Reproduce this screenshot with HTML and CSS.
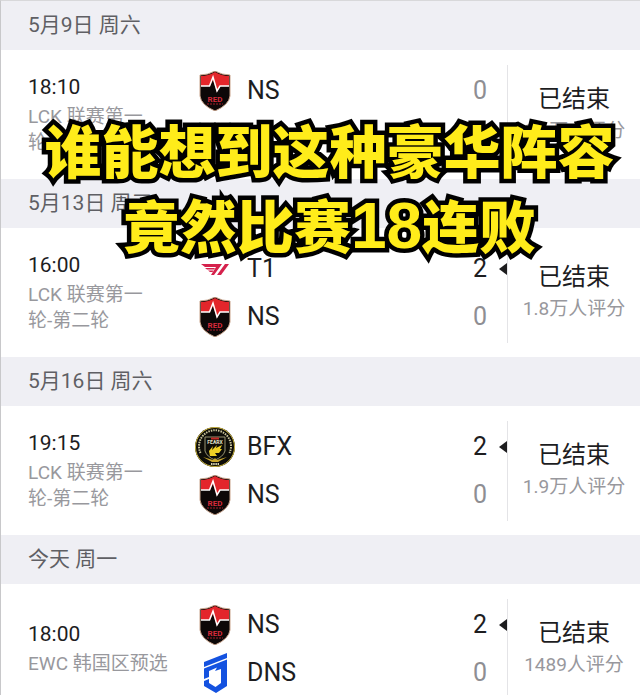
FILE: index.html
```html
<!DOCTYPE html>
<html lang="zh-CN">
<head>
    <meta charset="UTF-8">
    <meta name="viewport" content="width=device-width, initial-scale=1.0">
    <title>NS 赛程</title>
    <link rel="stylesheet" href="styles.css">
</head>
<body>
    <!-- Shared team logo -->
    <svg class="sprite" aria-hidden="true">
        <symbol id="logo-ns" viewBox="0 0 40 40">
            <path d="M20 0 Q27 4 35 4 V25 Q34 34 20 40 Q6 34 5 25 V4 Q13 4 20 0Z" fill="#0d0808" stroke="#c9a48c" stroke-width="1"/>
            <path d="M20 1 Q27 5 34 5 V15 H25 L22 21 L18 9 L15 15 H6 V5 Q13 5 20 1Z" fill="#e3262b"/>
            <path d="M6 15 H14.500 L18 6 L22 20 L25 15 H34" fill="none" stroke="#fff" stroke-width="1.500"/>
            <text x="20" y="31" class="logo-red">RED</text>
            <path d="M12 33 H28" stroke="#a81e2b" stroke-width="1" stroke-dasharray="2 1"/>
        </symbol>
    </svg>

    <main class="schedule">
        <section>
            <h2 class="date">5月9日 周六</h2>
            <div class="match">
                <div class="info">
                    <div class="time">18:10</div>
                    <div class="stage">LCK 联赛第一<br>轮-第二轮</div>
                </div>
                <div class="teams">
                    <div class="team">
                        <svg class="logo"><use href="#logo-ns"/></svg>
                        <span class="name">NS</span>
                        <span class="score">0</span>
                    </div>
                    <div class="team">
                        <svg class="logo" viewBox="0 0 40 40">
                            <path d="M4 3 L15 8 L11 11Z M36 3 L25 8 L29 11Z" fill="#12604c"/>
                        </svg>
                    </div>
                </div>
                <div class="status">
                    <div class="state">已结束</div>
                    <div class="rating">1.1万人评分</div>
                </div>
            </div>
        </section>

        <section>
            <h2 class="date">5月13日 周三</h2>
            <div class="match">
                <div class="info">
                    <div class="time">16:00</div>
                    <div class="stage">LCK 联赛第一<br>轮-第二轮</div>
                </div>
                <div class="teams">
                    <div class="team winner">
                        <svg class="logo" viewBox="0 0 40 40">
                            <path d="M6 15 H27 L19 26 H16 L21 18 H10Z" fill="#d5214c"/>
                            <path d="M10 19 H20 L19 20.500 H12Z M13 21.500 H18.500 L17.500 23 H15Z" fill="#d5214c"/>
                            <path d="M30 15 H34 L26 26 H22Z" fill="#d5214c"/>
                        </svg>
                        <span class="name">T1</span>
                        <span class="score">2</span>
                    </div>
                    <div class="team">
                        <svg class="logo"><use href="#logo-ns"/></svg>
                        <span class="name">NS</span>
                        <span class="score">0</span>
                    </div>
                </div>
                <div class="status">
                    <div class="state">已结束</div>
                    <div class="rating">1.8万人评分</div>
                </div>
            </div>
        </section>

        <section>
            <h2 class="date">5月16日 周六</h2>
            <div class="match">
                <div class="info">
                    <div class="time">19:15</div>
                    <div class="stage">LCK 联赛第一<br>轮-第二轮</div>
                </div>
                <div class="teams">
                    <div class="team winner">
                        <svg class="logo" viewBox="0 0 40 40">
                            <circle cx="20" cy="20" r="20" fill="#0d0c08"/>
                            <circle cx="20" cy="20" r="19.500" fill="none" stroke="#c8b13a"/>
                            <path d="M5.500 26 A16 16 0 1 1 34.500 26" fill="none" stroke="#c9c49b" stroke-width="2" stroke-dasharray="1.500 1"/>
                            <path d="M10 10 H30 V24 Q28 30 20 33 Q12 30 10 24Z" fill="#0d0c08" stroke="#9a9472"/>
                            <path d="M16 11.500 H24" stroke="#c22a25" stroke-width="2"/>
                            <text x="20" y="17" class="logo-fearx">FEARX</text>
                            <path d="M15 29 L14 24 L18 19 L17 23 L22 18 L21 21 L27 18 L25 22 L27 22 L24 26 L20 26 L22 29Z" fill="#f0d025"/>
                            <path d="M8 30 L18 33 L20 31 L22 33 L32 30 L23 35 H17Z" fill="#c8a62e"/>
                            <path d="M16 37 H24" stroke="#d8d4b0" stroke-width="2" stroke-dasharray="1.500 .7"/>
                        </svg>
                        <span class="name">BFX</span>
                        <span class="score">2</span>
                    </div>
                    <div class="team">
                        <svg class="logo"><use href="#logo-ns"/></svg>
                        <span class="name">NS</span>
                        <span class="score">0</span>
                    </div>
                </div>
                <div class="status">
                    <div class="state">已结束</div>
                    <div class="rating">1.9万人评分</div>
                </div>
            </div>
        </section>

        <section>
            <h2 class="date">今天 周一</h2>
            <div class="match">
                <div class="info">
                    <div class="time">18:00</div>
                    <div class="stage">EWC 韩国区预选</div>
                </div>
                <div class="teams">
                    <div class="team winner">
                        <svg class="logo"><use href="#logo-ns"/></svg>
                        <span class="name">NS</span>
                        <span class="score">2</span>
                    </div>
                    <div class="team">
                        <svg class="logo" viewBox="0 0 40 40">
                            <path d="M9 9 L32 0 V5 L9 14Z" fill="#1452e0"/>
                            <path d="M9 15.500 L32 6.500 V33 L21 40 L9 33 V28 L14 26 V30 L20.500 34 L26 30 V16 L20 18 L22 14.500 L14 18 V24 L9 26Z" fill="#1452e0"/>
                        </svg>
                        <span class="name">DNS</span>
                        <span class="score">0</span>
                    </div>
                </div>
                <div class="status">
                    <div class="state">已结束</div>
                    <div class="rating">1489人评分</div>
                </div>
            </div>
        </section>

        <h1 class="caption">谁能想到这种豪华阵容<br>竟然比赛<span class="number">18</span>连败</h1>
    </main>
</body>
</html>
```
FILE: styles.css
```css
* {
    margin: 0;
    padding: 0;
    box-sizing: border-box;
}

body {
    font-family: Roboto, "Noto Sans CJK SC", sans-serif;
    background-color: #fff;
    color: #1d1d1f;
}

.sprite {
    position: absolute;
    width: 0;
    height: 0;
}

.schedule {
    position: relative;
    height: 100vh;
    overflow: hidden;
    border-top: 1px solid #d8d8da;
    border-left: 1px solid #c8c8ca;
}

.date {
    padding-left: 27px;
    background-color: #efeff4;
    color: #5f5f64;
    font-size: 21px;
    font-weight: 400;
    line-height: 49px;
}

.match {
    display: grid;
    grid-template-columns: 194px 1fr 133px;
    align-items: center;
    height: 129px;
}

.info {
    padding-left: 27px;
    white-space: nowrap;
}

.time {
    margin-bottom: 3px;
    font-size: 21px;
    line-height: 28px;
}

.stage {
    color: #98989d;
    font-size: 19px;
    line-height: 26px;
}

.team {
    position: relative;
    display: flex;
    align-items: center;
    height: 48px;
    padding-right: 20px;
    font-size: 25px;
}

.logo {
    width: 40px;
    height: 40px;
    margin-right: 12px;
}

.score {
    margin-left: auto;
    color: #8e8e93;
}

.winner .score {
    color: #1d1d1f;
}

/* arrow pointing at the winning score */
.winner::after {
    content: "";
    position: absolute;
    right: 0;
    border: 6px solid transparent;
    border-right: 8px solid #1d1d1f;
    border-left: 0;
}

.status {
    display: flex;
    flex-direction: column;
    justify-content: center;
    height: 100px;
    border-left: 1px solid #e4e4e7;
    text-align: center;
    white-space: nowrap;
}

.state {
    font-size: 24px;
    line-height: 32px;
}

.rating {
    color: #98989d;
    font-size: 19px;
    line-height: 32px;
}

.caption {
    position: absolute;
    top: 110px;
    left: 18px;
    right: 0;
    color: #ffec1a;
    font-family: "Noto Sans CJK SC", sans-serif;
    font-size: 57px;
    font-weight: 900;
    line-height: 75px;
    text-align: center;
    white-space: nowrap;
    -webkit-text-stroke: 9px #000;
    paint-order: stroke fill;
}

.number {
    font-family: "Liberation Sans", sans-serif;
    font-size: 64px;
    line-height: 1;
}

.logo-red {
    fill: #d52a3a;
    font-size: 8px;
    font-weight: 700;
    text-anchor: middle;
}

.logo-fearx {
    fill: #e8e4cc;
    font-size: 5px;
    font-weight: 700;
    text-anchor: middle;
}
```
